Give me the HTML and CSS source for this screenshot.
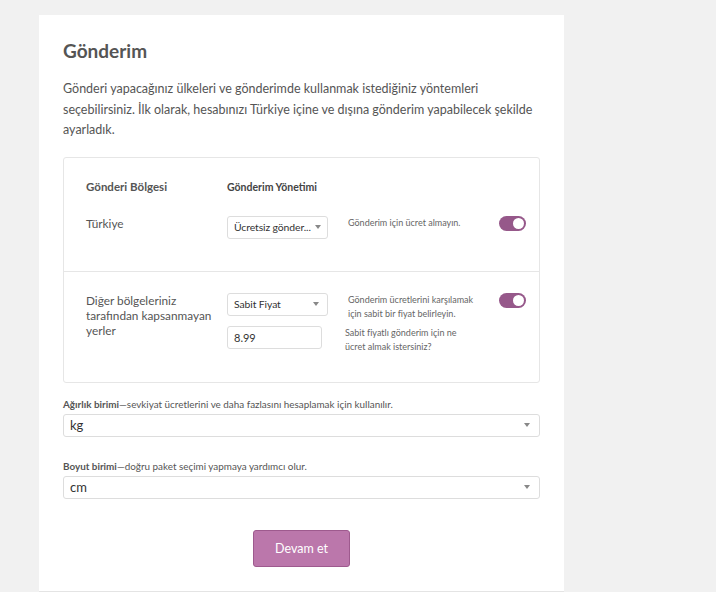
FILE: index.html
```html
<!DOCTYPE html>
<html lang="tr">

<head>
    <meta charset="UTF-8">
    <title>Gönderim</title>
    <link rel="stylesheet" href="styles.css">
</head>

<body>

    <section class="kart">
        <h1 class="baslik">Gönderim</h1>
        <p class="aciklama">Gönderi yapacağınız ülkeleri ve gönderimde kullanmak istediğiniz yöntemleri seçebilirsiniz. İlk olarak, hesabınızı Türkiye içine ve dışına gönderim yapabilecek şekilde ayarladık.</p>

        <div class="bolgeler">
            <div class="satir">
                <div class="bolge-baslik">Gönderi Bölgesi</div>
                <div class="yontem-baslik">Gönderim Yönetimi</div>
                <div></div>
                <div></div>

                <div class="bolge">Türkiye</div>
                <div class="yontem">
                    <div class="secim kisa"><span>Ücretsiz gönder...</span><i class="ok"></i></div>
                </div>
                <div class="not">Gönderim için ücret almayın.</div>
                <div class="anahtar"><span></span></div>
            </div>

            <div class="satir son">
                <div class="bolge">Diğer bölgeleriniz tarafından kapsanmayan yerler</div>
                <div class="yontem">
                    <div class="secim kisa"><span>Sabit Fiyat</span><i class="ok"></i></div>
                    <div class="girdi">8.99</div>
                </div>
                <div class="notlar">
                    <div class="not">Gönderim ücretlerini karşılamak için sabit bir fiyat belirleyin.</div>
                    <div class="not ikinci">Sabit fiyatlı gönderim için ne ücret almak istersiniz?</div>
                </div>
                <div class="anahtar"><span></span></div>
            </div>
        </div>

        <label class="etiket"><b>Ağırlık birimi</b>—sevkiyat ücretlerini ve daha fazlasını hesaplamak için kullanılır.</label>
        <div class="secim genis"><span>kg</span><i class="ok"></i></div>

        <label class="etiket"><b>Boyut birimi</b>—doğru paket seçimi yapmaya yardımcı olur.</label>
        <div class="secim genis"><span>cm</span><i class="ok"></i></div>

        <div class="alt">
            <button class="devam">Devam et</button>
        </div>
    </section>

</body>

</html>
```

FILE: styles.css
```css
body {
    margin: 0;
    background-color: #f1f1f1;
    font-family: Lato, "Open Sans", sans-serif;
    color: #555;
}

.kart {
    width: 477px;
    margin: 15px 0 0 39px;
    padding: 20px 24px 24px;
    background-color: #fff;
    border-bottom: 1px solid #e4e4e4;
}

.baslik {
    margin: 0;
    font-size: 19px;
    font-weight: 700;
    line-height: 32px;
    color: #555;
}

.aciklama {
    margin: 12px 0 16px;
    font-size: 12.5px;
    line-height: 20.5px;
    color: #555;
}

.bolgeler {
    border: 1px solid #e6e6e6;
    border-radius: 3px;
}

.satir {
    display: grid;
    grid-template-columns: 141px 121px 151px 27px;
    padding: 21px 15px 32px 22px;
    row-gap: 21px;
}

.satir.son {
    padding-bottom: 28px;
}

.satir + .satir {
    border-top: 1px solid #e6e6e6;
}

.bolge-baslik {
    font-size: 11.5px;
    font-weight: 700;
    line-height: 16px;
    color: #555;
}

.yontem-baslik {
    font-size: 10.5px;
    font-weight: 700;
    line-height: 16px;
    color: #444;
}

.bolge {
    max-width: 132px;
    font-size: 11.8px;
    line-height: 15px;
    color: #555;
}

.yontem {
    display: flex;
    flex-direction: column;
    gap: 10px;
}

.secim {
    display: flex;
    align-items: center;
    justify-content: space-between;
    box-sizing: border-box;
    height: 23px;
    padding: 0 8px 0 6px;
    border: 1px solid #ddd;
    border-radius: 3px;
    background: #fff;
    font-size: 11px;
    color: #333;
}

.secim span {
    white-space: nowrap;
    margin-right: 4px;
}

.secim.kisa {
    width: 101px;
}

.kisa span {
    font-size: 10.4px;
    letter-spacing: -0.1px;
}

.secim.genis {
    width: 477px;
    font-size: 13px;
    padding-left: 6px;
    padding-right: 9px;
}

.ok {
    flex: none;
    width: 0;
    height: 0;
    border-left: 3px solid transparent;
    border-right: 3px solid transparent;
    border-top: 4px solid #888;
}

.girdi {
    box-sizing: border-box;
    width: 95px;
    height: 23px;
    padding: 0 6px;
    border: 1px solid #ddd;
    border-radius: 3px;
    font-size: 11px;
    line-height: 21px;
    color: #333;
}

.not {
    font-size: 9px;
    line-height: 14px;
    color: #666;
    padding-right: 20px;
}

.not.ikinci {
    margin: 5px 0 0 -3px;
}

.anahtar {
    position: relative;
    width: 27px;
    height: 15px;
    border-radius: 8px;
    background-color: #96588a;
}

.anahtar span {
    position: absolute;
    top: 2px;
    right: 2px;
    width: 11px;
    height: 11px;
    border-radius: 50%;
    background-color: #fff;
}

.etiket {
    display: block;
    margin: 14px 0 3px;
    font-size: 9.9px;
    line-height: 14px;
    color: #555;
}

.etiket + .secim + .etiket {
    margin-top: 22px;
}

.alt {
    display: flex;
    justify-content: center;
    margin-top: 31px;
}

.devam {
    width: 97px;
    height: 37px;
    border: 1px solid #9e5a8e;
    border-radius: 3px;
    background-color: #bb77ab;
    color: #fff;
    font-family: inherit;
    font-size: 12.5px;
}
```
